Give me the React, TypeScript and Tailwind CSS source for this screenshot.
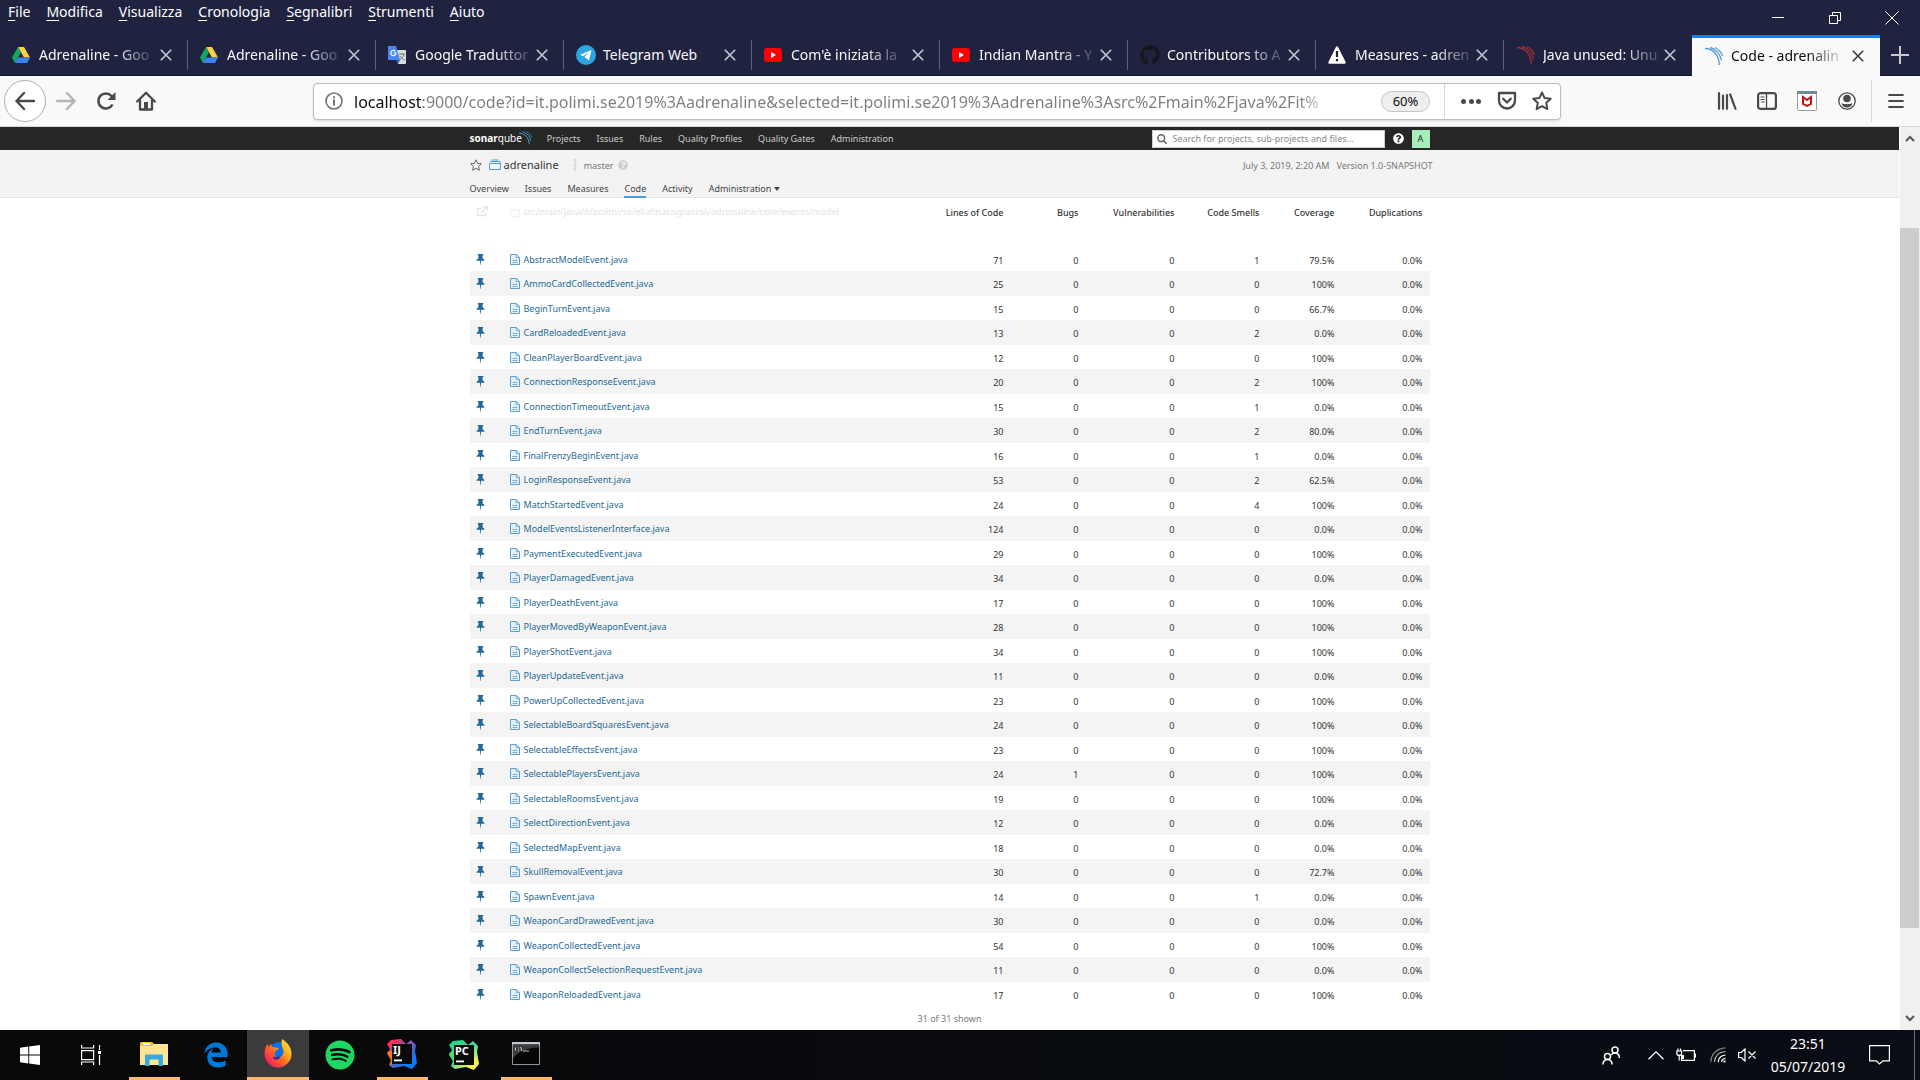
import React from "react";
import { FaSpotify, FaEdgeLegacy, FaGithub, FaQuestionCircle } from "react-icons/fa";

type FileRow = [name: string, lines: number, bugs: number, smells: number, coverage: string];

const files: FileRow[] = [
  ["AbstractModelEvent.java", 71, 0, 1, "79.5%"],
  ["AmmoCardCollectedEvent.java", 25, 0, 0, "100%"],
  ["BeginTurnEvent.java", 15, 0, 0, "66.7%"],
  ["CardReloadedEvent.java", 13, 0, 2, "0.0%"],
  ["CleanPlayerBoardEvent.java", 12, 0, 0, "100%"],
  ["ConnectionResponseEvent.java", 20, 0, 2, "100%"],
  ["ConnectionTimeoutEvent.java", 15, 0, 1, "0.0%"],
  ["EndTurnEvent.java", 30, 0, 2, "80.0%"],
  ["FinalFrenzyBeginEvent.java", 16, 0, 1, "0.0%"],
  ["LoginResponseEvent.java", 53, 0, 2, "62.5%"],
  ["MatchStartedEvent.java", 24, 0, 4, "100%"],
  ["ModelEventsListenerInterface.java", 124, 0, 0, "0.0%"],
  ["PaymentExecutedEvent.java", 29, 0, 0, "100%"],
  ["PlayerDamagedEvent.java", 34, 0, 0, "0.0%"],
  ["PlayerDeathEvent.java", 17, 0, 0, "100%"],
  ["PlayerMovedByWeaponEvent.java", 28, 0, 0, "100%"],
  ["PlayerShotEvent.java", 34, 0, 0, "100%"],
  ["PlayerUpdateEvent.java", 11, 0, 0, "0.0%"],
  ["PowerUpCollectedEvent.java", 23, 0, 0, "100%"],
  ["SelectableBoardSquaresEvent.java", 24, 0, 0, "100%"],
  ["SelectableEffectsEvent.java", 23, 0, 0, "100%"],
  ["SelectablePlayersEvent.java", 24, 1, 0, "100%"],
  ["SelectableRoomsEvent.java", 19, 0, 0, "100%"],
  ["SelectDirectionEvent.java", 12, 0, 0, "0.0%"],
  ["SelectedMapEvent.java", 18, 0, 0, "0.0%"],
  ["SkullRemovalEvent.java", 30, 0, 0, "72.7%"],
  ["SpawnEvent.java", 14, 0, 1, "0.0%"],
  ["WeaponCardDrawedEvent.java", 30, 0, 0, "0.0%"],
  ["WeaponCollectedEvent.java", 54, 0, 0, "100%"],
  ["WeaponCollectSelectionRequestEvent.java", 11, 0, 0, "0.0%"],
  ["WeaponReloadedEvent.java", 17, 0, 0, "100%"],
];

const menus = ["File", "Modifica", "Visualizza", "Cronologia", "Segnalibri", "Strumenti", "Aiuto"];

/* Tab icons */

const DriveIcon = () => (
  <svg viewBox="0 0 18 16" className="h-4 w-[18px]">
    <path d="M6 0h6l6 10.5h-6z" fill="#ffcf48" />
    <path d="M6 0l3 5.3L3 16 0 10.5z" fill="#11a861" />
    <path d="M6 10.5h12L15 16H3z" fill="#3d81f0" />
  </svg>
);

const TranslateIcon = () => (
  <svg viewBox="0 0 18 18" className="size-[18px]">
    <path d="M7 4h10.2c.5 0 .8.3.8.8v12.4c0 .5-.3.8-.8.8H10z" fill="#dcdcdc" />
    <path d="M11 8h6M14 7v1.500M16 8c-.5 3-3 5-4.500 6M12 10c1 2 3 3.500 5 4" stroke="#6f7d86" fill="none" />
    <path d="M.8 0H8l4 14H.8c-.5 0-.8-.3-.8-.8V.8C0 .3.300 0 .8 0z" fill="#4a87ee" />
    <path d="M10 18l-2-4h4z" fill="#3461b8" />
    <path d="M7.300 5.300A2.600 2.600 0 1 0 8 7H5.500" stroke="#fff" strokeWidth="1.200" fill="none" />
  </svg>
);

const TelegramIcon = () => (
  <svg viewBox="0 0 20 20" className="size-5">
    <circle cx="10" cy="10" r="10" fill="#2ca5e0" />
    <path d="M15.500 5L4 9.700l3.200 1.500L13 7l-4.500 5 4.500 3.500z" fill="#fff" />
  </svg>
);

const YoutubeIcon = () => (
  <svg viewBox="0 0 18 14" className="h-3.5 w-[18px]">
    <rect width="18" height="14" rx="3" fill="#f00" />
    <path d="M7 4l5 3-5 3z" fill="#fff" />
  </svg>
);

const WarnIcon = () => (
  <svg viewBox="0 0 18 18" className="size-[18px]">
    <path d="M9 1.500L16.500 16.500h-15z" fill="#fff" stroke="#fff" strokeWidth="2.400" strokeLinejoin="round" />
    <path d="M9 5v6M9 13v2.200" stroke="#20233f" strokeWidth="2.200" />
  </svg>
);

const WavesIcon = ({ color }: { color: string }) => (
  <svg viewBox="0 0 20 20" className="size-5" fill="none" stroke={color} strokeWidth="1.300">
    <path d="M1 2.500C9 2.500 15 9 15.300 19" />
    <path d="M6 1.500c6 1.500 10.500 7 11.500 13" />
    <path d="M11 1.500c3.500 1.800 6.300 5 7.500 8.500" />
  </svg>
);

const CloseIcon = () => (
  <svg viewBox="0 0 12 12" className="size-3" stroke="currentColor" strokeWidth="1.600">
    <path d="M.8.8l10.400 10.400M11.200.8L.8 11.200" />
  </svg>
);

const tabs: { title: string; icon: React.ReactNode; active?: boolean }[] = [
  { title: "Adrenaline - Goo", icon: <DriveIcon /> },
  { title: "Adrenaline - Goo", icon: <DriveIcon /> },
  { title: "Google Traduttor", icon: <TranslateIcon /> },
  { title: "Telegram Web", icon: <TelegramIcon /> },
  { title: "Com'è iniziata la", icon: <YoutubeIcon /> },
  { title: "Indian Mantra - Y", icon: <YoutubeIcon /> },
  { title: "Contributors to A", icon: <FaGithub className="size-5 text-[#15161c]" /> },
  { title: "Measures - adren", icon: <WarnIcon /> },
  { title: "Java unused: Unu", icon: <WavesIcon color="#a3303a" /> },
  { title: "Code - adrenalin", icon: <WavesIcon color="#549dd0" />, active: true },
];

function TitleBar() {
  return (
    <div className="flex h-[35px] items-start justify-between text-white">
      <nav className="flex gap-4 pl-2 text-sm leading-6">
        {menus.map((m) => (
          <button key={m}>
            <span className="underline underline-offset-3">{m[0]}</span>
            {m.slice(1)}
          </button>
        ))}
      </nav>
      <div className="flex">
        <button aria-label="Minimize" className="grid h-[35px] w-[57px] place-items-center">
          <span className="h-px w-3 bg-white" />
        </button>
        <button aria-label="Restore" className="grid h-[35px] w-[57px] place-items-center">
          <svg viewBox="0 0 12 12" className="size-3" fill="none" stroke="#fff">
            <path d="M.5 3.500h8v8h-8zM3.500 3V.5h8v8H9" />
          </svg>
        </button>
        <button aria-label="Close" className="grid h-[35px] w-[57px] place-items-center">
          <svg viewBox="0 0 14 14" className="size-3.5" stroke="#fff">
            <path d="M.5.5l13 13M13.500.5l-13 13" />
          </svg>
        </button>
      </div>
    </div>
  );
}

function TabStrip() {
  return (
    <div className="flex h-[41px]">
      {tabs.map((t, i) => (
        <div
          key={i}
          className={
            "flex min-w-0 flex-1 items-center pl-3 " +
            (t.active
              ? "border-t-3 border-[#0a84ff] bg-[#f9f9fa] pb-[3px] text-[#0c0c0d]"
              : "border-b border-[#10112a] text-[#f9f9fa]")
          }
        >
          <span className="grid w-[27px] shrink-0 place-items-center justify-start">{t.icon}</span>
          <button className="min-w-0 flex-1 text-left text-sm whitespace-nowrap">
            <span
              className={
                t.title === "Telegram Web" ? "" : "[mask-image:linear-gradient(to_right,#000_70%,rgb(0_0_0/0.2))]"
              }
            >
              {t.title}
            </span>
          </button>
          <button aria-label="Close tab" className={"mr-[15px] " + (t.active ? "text-[#3a3a3c]" : "text-[#c9c9d2]")}>
            <CloseIcon />
          </button>
          <span className={"h-[30px] w-px " + (i < 8 ? "bg-[#5d5f78]" : "")} />
        </div>
      ))}
      <button aria-label="New tab" className="grid w-10 place-items-center border-b border-[#10112a]">
        <svg viewBox="0 0 18 18" className="size-[18px]" stroke="#c9c9d2" strokeWidth="2">
          <path d="M9 0v18M0 9h18" />
        </svg>
      </button>
    </div>
  );
}

function Toolbar() {
  return (
    <div className="flex h-[51px] items-center border-b border-[#d7d7db] bg-[#f9f9fa] pr-1 text-[#4a4a4b]">
      <div className="flex w-[313px] shrink-0 items-center pl-1">
        <button aria-label="Back" className="grid size-[42px] place-items-center rounded-full border border-[#b1b1b3] bg-white">
          <svg viewBox="0 0 20 20" className="size-5" fill="none" stroke="currentColor" strokeWidth="2.400" strokeLinecap="round" strokeLinejoin="round">
            <path d="M19 10H1.500M9 2L1.500 10 9 18" />
          </svg>
        </button>
        <button aria-label="Forward" className="grid h-10 w-10 place-items-center text-[#b4b4b6]">
          <svg viewBox="0 0 20 20" className="size-5" fill="none" stroke="currentColor" strokeWidth="2.400" strokeLinecap="round" strokeLinejoin="round">
            <path d="M1 10h17.500M11 2l7.500 8-7.500 8" />
          </svg>
        </button>
        <button aria-label="Reload" className="grid h-10 w-10 place-items-center">
          <svg viewBox="0 0 20 20" className="size-5" fill="none" stroke="currentColor" strokeWidth="2.600">
            <path d="M16.500 13.500A7.500 7.500 0 1 1 15.500 5l2 2" />
            <path d="M19.500 1v8h-8z" fill="currentColor" stroke="none" />
          </svg>
        </button>
        <button aria-label="Home" className="grid h-10 w-10 place-items-center">
          <svg viewBox="0 0 20 20" className="size-5" fill="none" stroke="currentColor" strokeWidth="2.300" strokeLinejoin="round" strokeLinecap="round">
            <path d="M1.200 10.500L10 1.700l8.800 8.800M4 9v9.500h12V9" />
            <path d="M8 11h4v7H8z" fill="currentColor" stroke="none" />
          </svg>
        </button>
      </div>
      <div className="flex h-[37px] min-w-0 flex-1 items-center rounded-sm border border-[#bdbdbf] bg-white pr-2 shadow-sm">
        <span className="grid w-10 shrink-0 place-items-center">
          <svg viewBox="0 0 18 18" className="size-[18px]" fill="none" stroke="#737374" strokeWidth="1.600">
            <circle cx="9" cy="9" r="8" />
            <path d="M9 7.500V13.500M9 4.300v2" strokeWidth="2" />
          </svg>
        </span>
        <input
          aria-label="Address"
          className="min-w-0 flex-1 bg-[linear-gradient(to_right,#0c0c0d_69px,#7d7d7f_69px,#7d7d7f_96%,transparent)] bg-clip-text pt-0.5 text-base text-transparent outline-none"
          defaultValue="localhost:9000/code?id=it.polimi.se2019%3Aadrenaline&selected=it.polimi.se2019%3Aadrenaline%3Asrc%2Fmain%2Fjava%2Fit%"
        />
        <button className="mr-3.5 ml-11 h-[21px] w-[49px] rounded-full border border-[#c5c5c8] bg-[#eeeeef] text-[13px] leading-none text-[#0c0c0d]">
          60%
        </button>
        <span className="mr-4 h-[34px] w-px bg-[#d7d7db]" />
        <button aria-label="Page actions" className="flex w-5 justify-between">
          <span className="size-[5px] rounded-full bg-current" />
          <span className="size-[5px] rounded-full bg-current" />
          <span className="size-[5px] rounded-full bg-current" />
        </button>
        <button aria-label="Save to Pocket" className="ml-4">
          <svg viewBox="0 0 20 20" className="size-5" fill="none" stroke="currentColor" strokeWidth="2.300" strokeLinecap="round" strokeLinejoin="round">
            <path d="M2 2h16v7.500a8 8 0 0 1-16 0z" />
            <path d="M6.200 7.800L10 11.500l3.800-3.700" />
          </svg>
        </button>
        <button aria-label="Bookmark" className="ml-[15px]">
          <svg viewBox="0 0 20 20" className="size-5" fill="none" stroke="currentColor" strokeWidth="2" strokeLinejoin="round">
            <path d="M10 1.500l2.600 5.600 6.100.7-4.500 4.200 1.200 6.100-5.400-3-5.400 3L5.800 12 1.300 7.800l6.100-.7z" />
          </svg>
        </button>
      </div>
      <div className="ml-[146px] flex items-center">
        <button aria-label="Library" className="grid w-10 place-items-center">
          <svg viewBox="0 0 20 18" className="h-[18px] w-5" fill="none" stroke="currentColor" strokeWidth="2.200" strokeLinecap="round">
            <path d="M2 1.200v15.600M6 3.500v13.300M10 3v13.800M13.200 2.500l5.300 14.300" />
          </svg>
        </button>
        <button aria-label="Sidebars" className="grid w-10 place-items-center">
          <svg viewBox="0 0 20 18" className="h-[18px] w-5" fill="none" stroke="currentColor" strokeWidth="2.200">
            <rect x="1.100" y="1.100" width="17.800" height="15.800" rx="2.500" />
            <path d="M9.500 1v16" strokeWidth="1.300" />
            <path d="M3.500 5h4M3.500 7.500h4M4.500 10h3" strokeWidth="1.200" />
          </svg>
        </button>
        <button aria-label="WebAdvisor" className="grid w-10 place-items-center">
          <svg viewBox="0 0 20 20" className="size-5">
            <rect x=".5" y=".5" width="19" height="19" rx="1" fill="#fff" stroke="#9a9a9c" />
            <path d="M0 0h20v3H0z" fill="#6d8b98" />
            <path d="M6 6v6.800l4 2 4-2V6l-4 3z" fill="none" stroke="#c01818" strokeWidth="2" />
          </svg>
        </button>
        <button aria-label="Account" className="grid w-10 place-items-center">
          <svg viewBox="0 0 18 18" className="size-[18px]">
            <circle cx="9" cy="9" r="8.200" fill="none" stroke="currentColor" strokeWidth="1.300" />
            <circle cx="9" cy="6.500" r="3.800" fill="currentColor" />
            <path d="M3.500 11c2 1.600 9 1.600 11 0-.5 3-3 4.500-5.500 4.500S4 14 3.500 11z" fill="currentColor" />
          </svg>
        </button>
        <span className="mx-1 h-[42px] w-px bg-[#d7d7db]" />
        <button aria-label="Menu" className="grid w-10 place-items-center">
          <svg viewBox="0 0 16 16" className="size-4" stroke="currentColor" strokeWidth="2.200" strokeLinecap="round">
            <path d="M1.200 2h13.600M1.200 8h13.600M1.200 14h13.600" />
          </svg>
        </button>
      </div>
    </div>
  );
}

/* SonarQube page */

const PinIcon = () => (
  <svg viewBox="0 0 10 12" className="h-[11px] w-[9px]" fill="#236a97">
    <path d="M2 0h6v1.200l-.8.6.3 3C8.800 5.500 9.500 6.300 9.500 7.500H5.600L5.200 12h-.4l-.4-4.500H.5c0-1.200.7-2 2-2.700l.3-3L2 1.200z" />
  </svg>
);

const FileIcon = () => (
  <svg viewBox="0 0 10 11" className="h-[11px] w-2.5 shrink-0" fill="none" stroke="#5f9fcb">
    <path d="M.5.5h5.800l3.200 3v7h-9z" fill="#e4f0f8" />
    <path d="M6.200.5v3.200h3.300M2.500 6.500h5M2.500 8.500h5" strokeWidth=".8" />
  </svg>
);

function SonarNav() {
  return (
    <header className="bg-[#262626] text-[#ccc]">
      <div className="mx-auto flex h-[23px] w-full max-w-[960px] items-center">
        <a href="#" className="flex items-center text-[10px] text-white">
          <span>
            <b>sonar</b>qube
          </span>
          <svg viewBox="0 0 14 14" className="-ml-1 size-3.5 self-start" fill="none" stroke="#4b9fd5">
            <path d="M1 2.200c6 0 10 5 10.300 11" />
            <path d="M4.500.8c4.500 1 7.500 5 8.200 9" strokeWidth=".9" />
            <path d="M8.500.5c2.500 1.200 4.300 3.500 5 6" strokeWidth=".8" />
          </svg>
        </a>
        <nav className="ml-[15px] flex gap-4">
          {["Projects", "Issues", "Rules", "Quality Profiles", "Quality Gates", "Administration"].map((n) => (
            <a href="#" key={n}>
              {n}
            </a>
          ))}
        </nav>
        <label className="ml-auto flex h-[18px] w-[233px] items-center gap-1.5 border border-[#cdcdcd] bg-white pl-1">
          <svg viewBox="0 0 10 10" className="size-2.5" fill="none" stroke="#666" strokeWidth="1.500">
            <circle cx="4.200" cy="4.200" r="3.400" />
            <path d="M6.700 6.700l3 3" />
          </svg>
          <input
            aria-label="Search"
            placeholder="Search for projects, sub-projects and files..."
            className="min-w-0 flex-1 pt-px outline-none placeholder:text-[#888]"
          />
        </label>
        <button aria-label="Help" className="mx-2">
          <FaQuestionCircle className="size-[11px] text-white" />
        </button>
        <button className="grid size-[18px] place-items-center bg-[#a5eebb] text-[#222]">A</button>
      </div>
    </header>
  );
}

function ProjectHeader() {
  return (
    <div className="border-b border-[#e6e6e6] bg-[#f3f3f3] text-[#444]">
      <div className="mx-auto flex h-[47px] w-full max-w-[960px] flex-col justify-between">
        <div className="flex h-[30px] items-center">
          <button aria-label="Favorite">
            <svg viewBox="0 0 12 12" className="size-3" fill="none" stroke="#666" strokeLinejoin="round">
              <path d="M6 .8l1.600 3.500 3.800.5-2.800 2.600.7 3.800L6 9.400l-3.300 1.800.7-3.800L.6 4.800l3.800-.5z" />
            </svg>
          </button>
          <svg viewBox="0 0 12 12" className="ml-[7px] size-3 shrink-0" fill="none" stroke="#4b9fd5">
            <path d="M.5 4.500h11v6H.5zM1 2.500h10v2M2.500 1h7" />
          </svg>
          <a href="#" className="ml-[3px] text-[11px] text-[#333]">
            adrenaline
          </a>
          <svg viewBox="0 0 4 12" className="ml-[14px] h-3 w-1" fill="none" stroke="#ccc" strokeWidth=".8">
            <circle cx="2" cy="1.600" r="1.100" />
            <circle cx="2" cy="6" r="1.100" />
            <circle cx="2" cy="10.400" r="1.100" />
            <path d="M2 2.700v2.200M2 7.100v2.200" />
          </svg>
          <span className="ml-[7px] pt-0.5 text-[#777]">master</span>
          <FaQuestionCircle className="ml-[5px] size-2.5 text-[#cdcdcd]" />
          <span className="-mr-[3px] ml-auto flex gap-[7px] pt-px text-[#777]">
            <span>July 3, 2019, 2:20 AM</span>
            <span>Version 1.0-SNAPSHOT</span>
          </span>
        </div>
        <nav className="-mb-px flex h-[18px] gap-4 leading-[17px]">
          {["Overview", "Issues", "Measures", "Code", "Activity"].map((n) => (
            <a href="#" key={n} className={n === "Code" ? "border-b-2 border-[#4b9fd5]" : ""}>
              {n}
            </a>
          ))}
          <button className="flex items-center gap-[3px] self-start leading-[17px]">
            Administration
            <span className="border-x-3 border-t-4 border-x-transparent border-t-[#444]" />
          </button>
        </nav>
      </div>
    </div>
  );
}

function FileTable() {
  return (
    <main className="mx-auto w-full max-w-[960px] text-[#333]">
      <table className="w-full table-fixed border-collapse leading-3">
        <colgroup>
          <col className="w-10" />
          <col />
          <col className="w-[75px]" />
          <col className="w-[75px]" />
          <col className="w-24" />
          <col className="w-[85px]" />
          <col className="w-[75px]" />
          <col className="w-[88px]" />
        </colgroup>
        <thead>
          <tr className="h-[49px] align-top whitespace-nowrap">
            <td className="pt-2 pl-[7px]">
              <svg viewBox="0 0 11 11" className="size-[11px]" fill="none" stroke="#e0e7ec" strokeWidth="1.400">
                <path d="M8.500 6.500v3h-8v-7h4M6.500.8h3.800v3.800M10 1L4.500 6.500" />
              </svg>
            </td>
            <td className="pt-2">
              <span className="flex items-center gap-1 text-[#e4e4e4]">
                <svg viewBox="0 0 10 9" className="h-[9px] w-2.5 shrink-0" fill="none" stroke="#fdeedd">
                  <path d="M.5 1h3l1 1.500h5v6h-9z" />
                </svg>
                src/main/java/it/polimi/se/eliafinazzigrazioli/adrenaline/core/events/model
              </span>
            </td>
            {["Lines of Code", "Bugs", "Vulnerabilities", "Code Smells", "Coverage", "Duplications"].map((h) => (
              <th key={h} className="pt-[9px] pr-[7px] text-right font-medium" scope="col">
                <span className="float-right">{h}</span>
              </th>
            ))}
          </tr>
        </thead>
        <tbody>
          {files.map(([name, lines, bugs, smells, coverage], i) => (
            <tr key={name} className={i % 2 ? "h-[25px] bg-[#f4f4f4]" : "h-6"}>
              <td className="pl-[6px]">
                <button aria-label={"Pin " + name} className="block">
                  <PinIcon />
                </button>
              </td>
              <td>
                <a href="#" className="flex items-center gap-1 text-[#236a97]">
                  <FileIcon />
                  <span className="pt-px">{name}</span>
                </a>
              </td>
              {[lines, bugs, 0, smells, coverage, "0.0%"].map((v, c) => (
                <td key={c} className="pt-[3px] pr-[7px] text-right">
                  {v}
                </td>
              ))}
            </tr>
          ))}
        </tbody>
      </table>
      <p className="mt-[7px] text-center leading-3 text-[#777]">31 of 31 shown</p>
    </main>
  );
}

function Scrollbar() {
  return (
    <div className="flex w-5 shrink-0 flex-col items-center bg-[#f0f0f0]">
      <svg viewBox="0 0 10 7" className="mt-2 h-[7px] w-2.5" fill="none" stroke="#555" strokeWidth="2">
        <path d="M1 6l4-4 4 4" />
      </svg>
      <div className="mt-[86px] mr-px w-[19px] flex-[8] bg-[#cdcdcd]" />
      <div className="flex-1" />
      <svg viewBox="0 0 10 7" className="mb-2 h-[7px] w-2.5" fill="none" stroke="#555" strokeWidth="2">
        <path d="M1 1l4 4 4-4" />
      </svg>
    </div>
  );
}

/* Windows taskbar */

const WindowsIcon = () => (
  <svg viewBox="0 0 20 20" className="size-5" fill="#fff">
    <path d="M0 2.800L8.300 1.600v7.900H0zM9.200 1.500L20 0v9.500H9.200zM0 10.400h8.300v8L0 17.200zM9.200 10.400H20V20L9.200 18.500z" />
  </svg>
);

const TaskViewIcon = () => (
  <svg viewBox="0 0 20 20" className="size-5" fill="none" stroke="#fff" strokeWidth="1.200">
    <path d="M.6 5.600h12v9h-12zM.6 0v3h12V0M.6 20v-3h12v3M18.500 0v5M18.500 10v10" />
    <path d="M17 6h3v3h-3z" fill="#fff" stroke="none" />
  </svg>
);

const ExplorerIcon = () => (
  <svg viewBox="0 0 28 24" className="h-6 w-7">
    <path d="M1 0h11l2 2h13a1 1 0 0 1 1 1v20H0V1z" fill="#fbbf36" />
    <path d="M3 1h7v2H3z" fill="#e9f4f8" />
    <path d="M0 4h12l2-2h14v21H0z" fill="#ffe594" />
    <path d="M5 24V13.500a1 1 0 0 1 1-1h16a1 1 0 0 1 1 1V24h-4.500v-6.500h-9V24z" fill="#35a9e0" />
  </svg>
);

const FirefoxIcon = () => (
  <svg viewBox="0 0 28 29" className="h-[29px] w-7">
    <defs>
      <linearGradient id="fox" x1="1" y1="0" x2="0.100" y2="0.900">
        <stop offset="0" stopColor="#fff44f" />
        <stop offset=".35" stopColor="#ffb41f" />
        <stop offset=".6" stopColor="#ff6a1f" />
        <stop offset="1" stopColor="#f0146e" />
      </linearGradient>
    </defs>
    <circle cx="15" cy="13" r="10" fill="#0a6fe8" />
    <path d="M18 0c5 3 9.500 8 9.500 15A13.500 13.500 0 0 1 .5 15C.5 10 2 7 3.500 5L5 8l2-3.500 1 3.500c1.500-.3 3 0 3.500.5l3 .3c.5 1.500-2 2.500-3 3 .2 2-1 2.200-1 4 1 3 5 3.500 7 1.500 2.500-2.500 2.500-5 1-8C17.500 7 17 3 18 0z" fill="url(#fox)" />
    <path d="M10 17.500c2.500 1.500 4.500-.5 6.500.3-1 3-5 3.700-7.500 1.700z" fill="#3a2a9c" />
  </svg>
);

/* colors: top left, right, bottom left, left notch */
const IdeIcon = ({ label, colors }: { label: string; colors: [string, string, string, string] }) => (
  <svg viewBox="0 0 30 30" className="size-[30px]">
    <defs>
      <linearGradient id={"ide-" + label} x1="0.100" y1="0" x2="0.900" y2="1">
        <stop offset=".1" stopColor={colors[0]} />
        <stop offset=".5" stopColor={colors[1]} />
        <stop offset=".85" stopColor={colors[2]} />
      </linearGradient>
    </defs>
    <path d="M4 1l10-1 5 5 5-4 5 5-1 6 2 12-5 6-8-3-11 2-4-3 2-5-4-6 3-5-3-5z" fill={"url(#ide-" + label + ")"} />
    <path d="M0 13l6-2v12l-3 5 1-7z" fill={colors[3]} />
    <path d="M5 5h20v20H5z" fill="#0b0b0c" />
    <text x="6" y="15" fill="#fff" fontSize="11" fontWeight="700" fontFamily="Noto Sans, sans-serif">
      {label}
    </text>
    <path d="M7 20.500h8v1.800H7z" fill="#fff" />
  </svg>
);

const TerminalIcon = () => (
  <svg viewBox="0 0 28 23" className="h-[23px] w-7">
    <path d="M.5.5h27v22H.5z" fill="#050505" stroke="#8e959c" />
    <path d="M0 0h28v2.500H0z" fill="#c3c8cc" />
    <path d="M1 2.500h26v3C18 5 8 9 3 14l-2 2z" fill="#3c3c3e" />
    <path d="M3.500 5.500v3M6.500 5.500v1M6.500 8v1M8.500 5l1.500 4M11 9h6" stroke="#c8c8c8" fill="none" />
  </svg>
);

const apps: { name: string; icon: React.ReactNode; open?: boolean; focused?: boolean }[] = [
  { name: "Explorer", icon: <ExplorerIcon />, open: true },
  { name: "Edge", icon: <FaEdgeLegacy className="size-[26px] text-[#0078d7]" /> },
  { name: "Firefox", icon: <FirefoxIcon />, focused: true },
  { name: "Spotify", icon: <FaSpotify className="size-[30px] text-[#1ed760]" /> },
  { name: "IntelliJ IDEA", icon: <IdeIcon label="IJ" colors={["#fe315d", "#5a5fd0", "#087cfa", "#f97a12"]} />, open: true },
  { name: "PyCharm", icon: <IdeIcon label="PC" colors={["#21d789", "#5fd8a0", "#fcf84a", "#4fdc6f"]} /> },
  { name: "Command prompt", icon: <TerminalIcon />, open: true },
];

function Taskbar() {
  return (
    <footer className="flex h-[50px] shrink-0 bg-linear-to-r from-[#080808] to-[#090d14] text-white">
      <button aria-label="Start" className="grid w-[60px] place-items-center">
        <WindowsIcon />
      </button>
      <button aria-label="Task view" className="mr-px grid w-[62px] place-items-center">
        <TaskViewIcon />
      </button>
      {apps.map((a) => (
        <button
          key={a.name}
          aria-label={a.name}
          className={"flex w-[62px] flex-col items-center " + (a.focused ? "bg-[#3b3b3b]" : "")}
        >
          <span className="grid flex-1 place-items-center">{a.icon}</span>
          {a.open && <span className="h-[3px] w-[51px] bg-[#ffb86c]" />}
          {a.focused && <span className="h-[3px] w-full bg-[#ffb86c]" />}
        </button>
      ))}
      <div className="ml-auto flex items-center">
        <button aria-label="People" className="mr-7">
          <svg viewBox="0 0 18 19" className="h-[19px] w-[18px]" fill="none" stroke="#fff" strokeWidth="1.500">
            <circle cx="13" cy="4" r="3" />
            <circle cx="5.500" cy="10.500" r="3" />
            <path d="M.8 18.500c.3-3.300 2.200-5 4.700-5s4.400 1.700 4.700 5M9.300 8.700c1-1 2.200-1.700 3.700-1.700 2.500 0 4.200 1.700 4.500 5" />
          </svg>
        </button>
        <button aria-label="Hidden icons" className="mr-3">
          <svg viewBox="0 0 16 9" className="h-[9px] w-4" fill="none" stroke="#fff" strokeWidth="1.300">
            <path d="M.5 8.300L8 .9l7.500 7.400" />
          </svg>
        </button>
        <svg viewBox="0 0 20 14" className="mr-3.5 h-3.5 w-5" fill="none" stroke="#fff" strokeWidth="1.200">
          <path d="M7 2.600h11.400v9.800H5.500V9M19.500 5.500v4M.8 3h4.800v2.200c0 3-4.800 3-4.800 0zM2 3V.5M4.500 3V.5M3.200 7.500v5" />
          <path d="M5 7h3v4H5z" fill="#fff" stroke="none" />
        </svg>
        <svg viewBox="0 0 16 16" className="mr-3 size-4" fill="none" stroke="#fff" strokeWidth="1.200">
          <path d="M.8 15C1.200 7 7 1.200 15.500.8" opacity=".5" />
          <path d="M4.500 15C5 9 9 5 15.500 4.500" opacity=".7" />
          <path d="M8.200 15c.3-4 3-6.500 7.300-7M11.500 15c.3-2 1.500-3.500 4-3.700" />
          <path d="M13.500 13.500h2v2h-2z" fill="#fff" stroke="none" />
        </svg>
        <svg viewBox="0 0 18 14" className="mr-3 h-3.5 w-[18px]" fill="none" stroke="#fff" strokeWidth="1.200">
          <path d="M.6 4.500h2.600L7 1v12L3.200 9.500H.6zM10.500 3.500l7 7M17.500 3.500l-7 7" />
        </svg>
        <time className="w-20 text-center text-sm leading-[23px]">
          23:51
          <br />
          05/07/2019
        </time>
        <button aria-label="Notifications" className="ml-[21px]">
          <svg viewBox="0 0 21 20" className="h-5 w-[21px]" fill="none" stroke="#fff" strokeWidth="1.200">
            <path d="M.6.6h19.800v15.300h-6.600L10.500 19l-3.300-3.100H.6z" />
          </svg>
        </button>
        <span className="mr-[5px] ml-6 h-[50px] w-px bg-[#6b6d72]" />
      </div>
    </footer>
  );
}

export default function App() {
  return (
    <div className="flex h-screen flex-col overflow-hidden bg-white font-['Noto_Sans',sans-serif]">
      <div className="bg-[#20233f]">
        <TitleBar />
        <TabStrip />
      </div>
      <Toolbar />
      <div className="flex min-h-0 flex-1">
        <div className="mr-px min-w-0 flex-1 overflow-hidden text-[9px]">
          <SonarNav />
          <ProjectHeader />
          <FileTable />
        </div>
        <Scrollbar />
      </div>
      <Taskbar />
    </div>
  );
}
